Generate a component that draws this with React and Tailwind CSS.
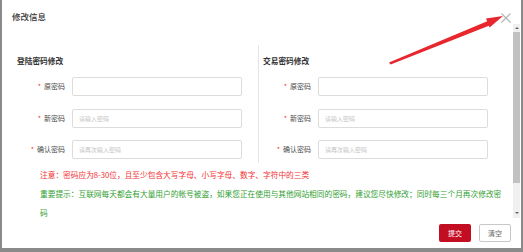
import React from "react";

const font = { fontFamily: '"Noto Sans CJK SC", "Noto Sans", sans-serif' };

function Row({ label, placeholder, mt }) {
  return (
    <div className={`flex items-center ${mt}`}>
      <div className="w-[48px] text-right text-[7px] leading-[19px] text-[#4a4a4a] whitespace-nowrap">
        <span className="text-[#e33] mr-[3px]">*</span>
        {label}
      </div>
      <div className="ml-[7px] w-[170px] h-[19px] border border-[#dcdcdc] rounded-[2px] bg-white flex items-center pl-[6px] text-[6px] text-[#c4c4c4]">
        {placeholder}
      </div>
    </div>
  );
}

function Section({ title, className }) {
  return (
    <div className={className}>
      <div className="text-[7.7px] leading-[12px] font-bold text-[#333]">{title}</div>
      <Row label="原密码" placeholder="" mt="mt-[10px]" />
      <Row label="新密码" placeholder="请输入密码" mt="mt-[13px]" />
      <Row label="确认密码" placeholder="请再次输入密码" mt="mt-[12px]" />
    </div>
  );
}

export default function App() {
  return (
    <div
      style={font}
      className="relative w-[523px] h-[252px] bg-white border-l-2 border-r-2 border-b-4 border-[#8a8a8a] flex flex-col overflow-hidden"
    >
      {/* header */}
      <div className="h-[24px] shrink-0 pl-[10px] pt-[11px]">
        <div className="text-[8.5px] leading-[10px] font-medium text-[#333]">修改信息</div>
      </div>

      {/* body */}
      <div className="h-[194px] shrink-0 flex">
        <div className="w-[511px] overflow-hidden pt-[21px]">
          <div className="flex h-[118px]">
            <Section title="登陆密码修改" className="w-[256px] pl-[15px] pt-[10px]" />
            <Section title="交易密码修改" className="flex-1 border-l border-[#e4e4e4] pl-[4px] pt-[10px]" />
          </div>
          <div className="pl-[38px] mt-[2px] text-[7.7px] leading-[19px] w-[500px]">
            <div className="text-[#f23030]">
              注意：密码应为8-30位，且至少包含大写字母、小写字母、数字、字符中的三类
            </div>
            <div className="text-[#2f9e2f] w-[462px]">
              重要提示：互联网每天都会有大量用户的帐号被盗，如果您正在使用与其他网站相同的密码，建议您尽快修改；同时每三个月再次修改密码
            </div>
          </div>
        </div>
        {/* scrollbar */}
        <div className="w-[7px] bg-[#f0f0f0] flex flex-col items-center">
          <div className="h-[8px] flex items-center justify-center">
            <div className="w-0 h-0 border-l-[2px] border-r-[2px] border-b-[2px] border-l-transparent border-r-transparent border-b-[#666]" />
          </div>
          <div className="w-[7px] h-[151px] bg-[#c1c1c1]" />
          <div className="flex-1" />
          <div className="h-[10px] flex items-center justify-center">
            <div className="w-0 h-0 border-l-[2px] border-r-[2px] border-t-[2px] border-l-transparent border-r-transparent border-t-[#666]" />
          </div>
        </div>
        <div className="w-[1px]" />
      </div>

      {/* footer */}
      <div className="flex-1 flex justify-end gap-[8px] pt-[6px] pr-[10px]">
        <div className="w-[32px] h-[18px] rounded-[2px] bg-[#c30d23] text-white text-[7px] flex items-center justify-center">
          提交
        </div>
        <div className="w-[32px] h-[18px] rounded-[2px] bg-white border border-[#c8c8c8] text-[#666] text-[7px] flex items-center justify-center">
          清空
        </div>
      </div>

      {/* close X */}
      <svg className="absolute left-[499px] top-[13px]" width="10" height="10" viewBox="0 0 10 10">
        <path d="M0.5 0.5 L9.5 9.5 M9.5 0.5 L0.5 9.5" stroke="#b5b5b5" strokeWidth="1.2" />
      </svg>

      {/* annotation arrow */}
      <svg className="absolute left-0 top-0 pointer-events-none" width="523" height="252" viewBox="0 0 523 252">
        <polygon points="387,62.5 388.6,64.5 487.5,25.5 485.8,21" fill="#e8262d" />
        <polygon points="501,16 484,18.6 487.6,27.6" fill="#e8262d" />
      </svg>
    </div>
  );
}
